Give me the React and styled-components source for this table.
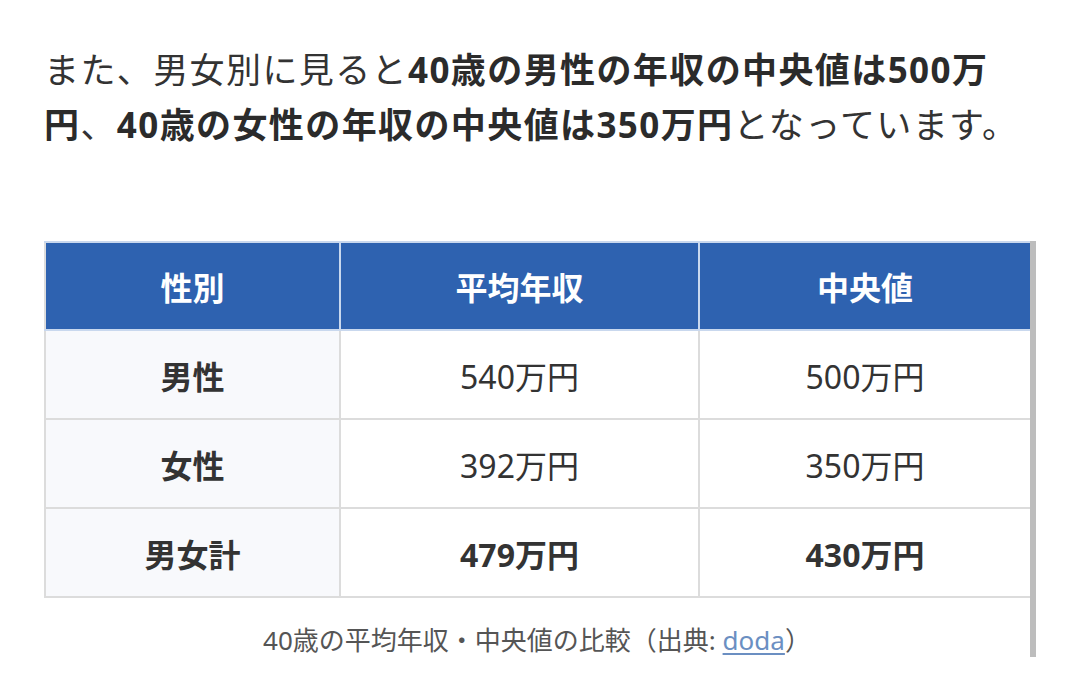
import styled, { createGlobalStyle } from "styled-components";

const rows = [
    { label: '男性', avg: '540万円', median: '500万円' },
    { label: '女性', avg: '392万円', median: '350万円' },
    { label: '男女計', avg: '479万円', median: '430万円', total: true },
];

const GlobalStyle = createGlobalStyle`
    body {
        margin: 0;
        background: #ffffff;
        font-family: "Noto Sans", "Noto Sans CJK JP", sans-serif;
        color: #333333;
    }
`;

const App = () => {
    return (
        <Page>
            <GlobalStyle />
            <Lead>
                また、男女別に見ると<b>40歳の男性の年収の中央値は500万円</b>、<b>40歳の女性の年収の中央値は350万円</b>となっています。
            </Lead>
            <TableArea>
                <TableColumn>
                    <Table>
                        <colgroup>
                            <col style={{ width: '295px' }} />
                            <col style={{ width: '359px' }} />
                            <col />
                        </colgroup>
                        <thead>
                            <tr>
                                <HeadCell>性別</HeadCell>
                                <HeadCell>平均年収</HeadCell>
                                <HeadCell>中央値</HeadCell>
                            </tr>
                        </thead>
                        <tbody>
                            {rows.map((row) => (
                                <tr key={row.label}>
                                    <LabelCell>{row.label}</LabelCell>
                                    <Cell $bold={row.total}>{row.avg}</Cell>
                                    <Cell $bold={row.total}>{row.median}</Cell>
                                </tr>
                            ))}
                        </tbody>
                    </Table>
                    <Caption>
                        40歳の平均年収・中央値の比較（出典: <SourceLink href="#">doda</SourceLink>）
                    </Caption>
                </TableColumn>
                <ScrollBar />
            </TableArea>
        </Page>
    );
}

export default App;


const Page = styled.div`
    padding: 42px 0 0 44px;
    width: 992px;
`;

const Lead = styled.p`
    margin: 0;
    width: 986px;
    font-size: 35px;
    line-height: 55px;
    letter-spacing: 1.4px;
    color: #333333;

    b {
        font-weight: 700;
        color: #2b2b2b;
    }
`;

const TableArea = styled.div`
    display: flex;
    margin-top: 89px;
`;

const TableColumn = styled.div`
    width: 986px;
`;

const Table = styled.table`
    width: 100%;
    border-collapse: collapse;
    table-layout: fixed;
    border-left: 2px solid #dcdcdc;
`;

const HeadCell = styled.th`
    height: 86px;
    padding: 0;
    background-color: #2e62b0;
    color: #ffffff;
    font-size: 32px;
    font-weight: 700;
    text-align: center;
    border-top: 2px solid #c9d8ee;
    border-right: 2px solid #c9d8ee;
    border-bottom: 2px solid #c9d8ee;

    &:last-child {
        border-right: none;
    }
`;

const Cell = styled.td`
    height: 87px;
    padding: 0;
    background-color: #ffffff;
    font-size: 32px;
    font-weight: ${(p) => (p.$bold ? 700 : 400)};
    color: #333333;
    text-align: center;
    border-right: 2px solid #dcdcdc;
    border-bottom: 2px solid #dcdcdc;

    &:last-child {
        border-right: none;
    }
`;

const LabelCell = styled(Cell)`
    background-color: #f8f9fc;
    font-weight: 700;
`;

const Caption = styled.div`
    padding: 25px 0 0;
    text-align: center;
    font-size: 26px;
    line-height: 34px;
    color: #555555;
`;

const SourceLink = styled.a`
    color: #6b8fc2;
    text-decoration: underline;
    text-underline-offset: 3px;
`;

const ScrollBar = styled.div`
    width: 6px;
    background-color: #bdbdbd;
`;
